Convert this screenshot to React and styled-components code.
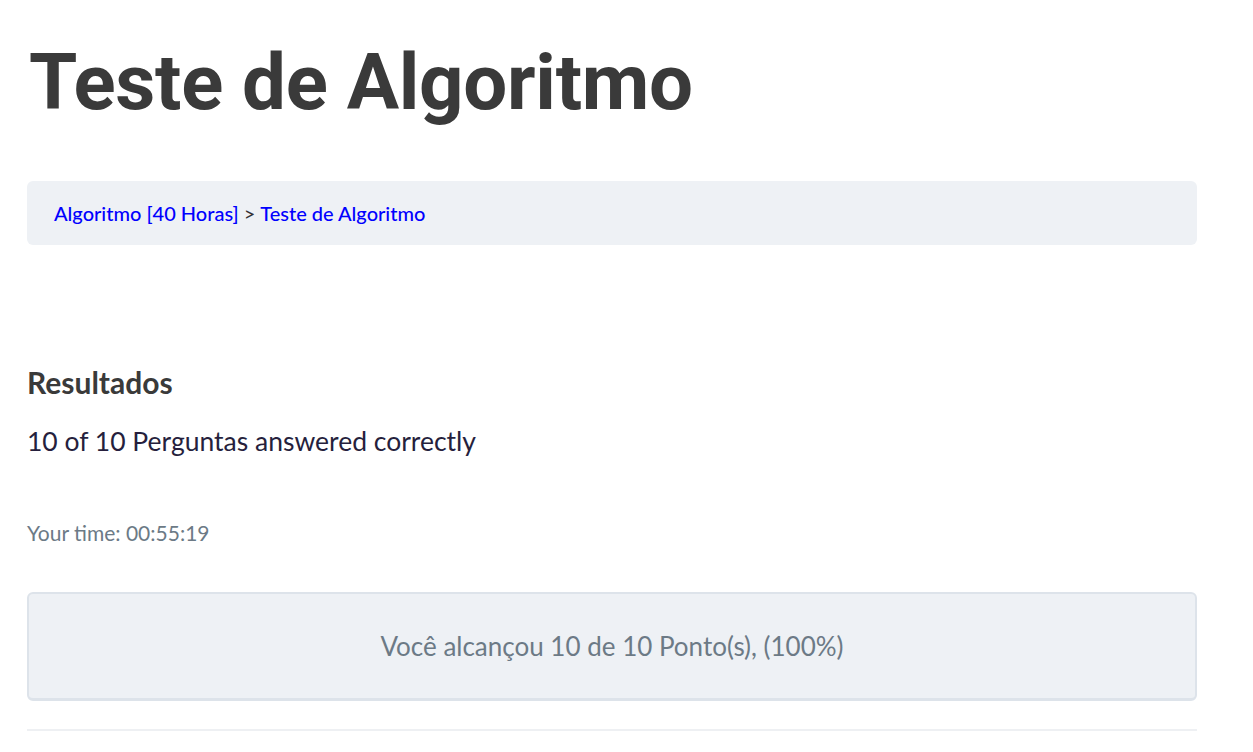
import styled, { createGlobalStyle } from 'styled-components';

const GlobalStyle = createGlobalStyle`
  html, body {
    margin: 0;
    padding: 0;
    background: #ffffff;
  }
  body {
    font-family: Lato, "Noto Sans", sans-serif;
  }
`;

const Page = styled.div`
  width: 1170px;
  padding: 0 0 0 27px;
`;

const Title = styled.h1`
  font-family: Roboto, "Liberation Sans", sans-serif;
  font-weight: 700;
  font-size: 78px;
  line-height: 1;
  color: #3a3a3a;
  margin: 0;
  padding: 44px 0 0 2px;
  letter-spacing: -0.3px;
`;

const Breadcrumb = styled.nav`
  margin-top: 59px;
  height: 64px;
  display: flex;
  align-items: center;
  padding: 0 27px;
  background: #eef1f5;
  border-radius: 6px;
  font-size: 20px;
  color: #333;
`;

const Crumb = styled.a`
  color: #0000ff;
  text-decoration: none;
  font-weight: 500;
`;

const Sep = styled.span`
  margin: 0 5px;
  color: #333;
`;

const Results = styled.section`
  margin-top: 122px;
`;

const Heading = styled.h3`
  font-size: 30px;
  font-weight: 700;
  color: #3a3a3a;
  margin: 0;
  line-height: 30px;
`;

const Score = styled.p`
  font-size: 26.5px;
  color: #261f3d;
  margin: 28px 0 0;
  line-height: 32px;
`;

const Time = styled.p`
  font-size: 21px;
  color: #6c7a86;
  margin: 64px 0 0;
  line-height: 24px;
`;

const PointsBox = styled.div`
  box-sizing: border-box;
  margin-top: 47px;
  height: 109px;
  border: 2px solid #dde3ea;
  border-bottom-width: 3px;
  border-radius: 6px;
  background: #eef1f5;
  display: flex;
  align-items: center;
  justify-content: center;
  font-size: 26px;
  color: #6c7a86;
`;

const Divider = styled.hr`
  border: none;
  height: 2px;
  background: #eef0f3;
  margin: 28px 0 0;
`;

export default function App() {
  return (
    <Page>
      <GlobalStyle />
      <Title>Teste de Algoritmo</Title>
      <Breadcrumb>
        <Crumb href="#">Algoritmo [40 Horas]</Crumb>
        <Sep>&gt;</Sep>
        <Crumb href="#">Teste de Algoritmo</Crumb>
      </Breadcrumb>
      <Results>
        <Heading>Resultados</Heading>
        <Score>10 of 10 Perguntas answered correctly</Score>
        <Time>Your time: 00:55:19</Time>
        <PointsBox>Você alcançou 10 de 10 Ponto(s), (100%)</PointsBox>
        <Divider />
      </Results>
    </Page>
  );
}
